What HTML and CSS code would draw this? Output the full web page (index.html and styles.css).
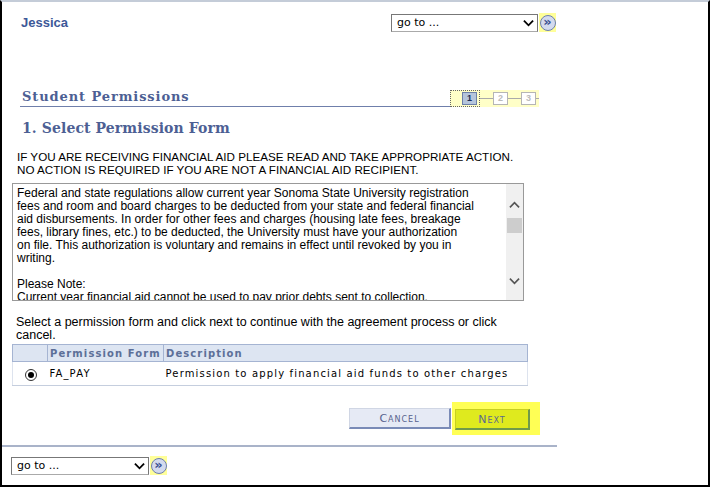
FILE: index.html
```html
<!DOCTYPE html>
<html lang="en">
<head>
    <meta charset="UTF-8">
    <title>Student Permissions</title>
    <link rel="stylesheet" href="styles.css">
</head>
<body>
<div class="page">

    <div class="topbar">
        <div class="user">Jessica</div>
        <div class="goto">
            <div class="select wide"><span>go to ...</span><svg class="chev" viewBox="0 0 12 8"><path d="M1 1.5 L6 6.5 L11 1.5" fill="none" stroke="#000" stroke-width="2"/></svg></div>
            <div class="gobtn"><span class="circ">&raquo;</span></div>
        </div>
    </div>

    <div class="titlebar">
        <h1>Student Permissions</h1>
        <div class="steps">
            <div class="step-cur"><span class="box on">1</span></div>
            <span class="link"></span>
            <span class="box">2</span>
            <span class="link"></span>
            <span class="box">3</span>
            <span class="link short"></span>
        </div>
    </div>

    <h2>1. Select Permission Form</h2>

    <p class="notice">IF YOU ARE RECEIVING FINANCIAL AID PLEASE READ AND TAKE APPROPRIATE ACTION.<br>NO ACTION IS REQUIRED IF YOU ARE NOT A FINANCIAL AID RECIPIENT.</p>

    <div class="terms">
        <div class="terms-text">
            Federal and state regulations allow current year Sonoma State University registration<br>
            fees and room and board charges to be deducted from your state and federal financial<br>
            aid disbursements. In order for other fees and charges (housing late fees, breakage<br>
            fees, library fines, etc.) to be deducted, the University must have your authorization<br>
            on file. This authorization is voluntary and remains in effect until revoked by you in<br>
            writing.<br><br>
            Please Note:<br>
            Current year financial aid cannot be used to pay prior debts sent to collection.
        </div>
        <div class="scroll">
            <svg class="arr up" viewBox="0 0 12 8"><path d="M1 6.5 L6 1.5 L11 6.5" fill="none" stroke="#555" stroke-width="1.8"/></svg>
            <div class="thumb"></div>
            <div class="track"></div>
            <svg class="arr down" viewBox="0 0 12 8"><path d="M1 1.5 L6 6.5 L11 1.5" fill="none" stroke="#555" stroke-width="1.8"/></svg>
        </div>
    </div>

    <p class="hint">Select a permission form and click next to continue with the agreement process or click cancel.</p>

    <table class="grid">
        <tr class="head">
            <th class="c-radio"></th>
            <th class="c-form">Permission Form</th>
            <th class="c-desc">Description</th>
        </tr>
        <tr class="row">
            <td class="c-radio"><span class="radio"><span class="dot"></span></span></td>
            <td class="c-form">FA_PAY</td>
            <td class="c-desc">Permission to apply financial aid funds to other charges</td>
        </tr>
    </table>

    <div class="actions">
        <button class="btn cancel">Cancel</button>
        <div class="hl"><button class="btn next">Next</button></div>
    </div>

    <div class="footbar">
        <div class="goto">
            <div class="select narrow"><span>go to ...</span><svg class="chev" viewBox="0 0 12 8"><path d="M1 1.5 L6 6.5 L11 1.5" fill="none" stroke="#000" stroke-width="2"/></svg></div>
            <div class="gobtn"><span class="circ">&raquo;</span></div>
        </div>
    </div>

</div>
</body>
</html>
```

FILE: styles.css
```css
* { margin: 0; padding: 0; box-sizing: border-box; }
body { background: #fff; font-family: "Liberation Sans", Arial, sans-serif; font-size: 11.65px; color: #000; }
.page { width: 710px; height: 487px; border: 2px solid #000; border-top: 2px solid #c4ccd8; overflow: hidden; }

/* top bar */
.topbar { display: flex; justify-content: space-between; padding: 11px 0 0 19px; width: 554px; }
.user { font-weight: bold; font-size: 13px; color: #3c5898; padding-top: 2px; }
.goto { display: flex; align-items: center; gap: 1px; }
.select { height: 18px; border: 1px solid #777; border-bottom-color: #aaa; display: flex; align-items: center; justify-content: space-between; padding: 0 3px 0 5px; font-size: 11px; font-family: "DejaVu Sans", sans-serif; }
.select.wide { width: 147px; }
.select.narrow { width: 138px; }
.chev { width: 11px; height: 8px; }
.gobtn { width: 17px; height: 19px; background: #ffff99; display: flex; align-items: center; justify-content: center; }
.circ { width: 16px; height: 16px; border-radius: 50%; border: 1px solid #6d7fae; background: #d3daee; color: #3a4f8f; font-family: "DejaVu Sans", sans-serif; font-size: 13px; line-height: 12px; text-align: center; font-weight: bold; }

/* title */
.titlebar { display: flex; align-items: flex-end; margin: 57px 0 0 18px; width: 519px; }
h1 { flex: 1; font-family: "DejaVu Serif", Georgia, serif; font-size: 13px; letter-spacing: 0.9px; color: #4d5f94; border-bottom: 1px solid #6f7fab; padding: 0 0 2px 2px; }
.steps { display: flex; align-items: center; height: 17px; background: #ffffc8; margin-bottom: 0; }
.step-cur { border: 1px dotted #666; height: 17px; width: 30px; display: flex; align-items: center; justify-content: flex-end; padding-right: 2px; }
.box { width: 15px; height: 13px; border: 1px solid #b5b5b5; background: #fff; color: #bbb; font-size: 9px; font-weight: bold; line-height: 11px; text-align: center; }
.box.on { background: #b4c4dc; border-color: #6c7fa8; color: #1c2c54; }
.link { width: 13px; height: 1px; background: #aaa; }
.link.short { width: 3px; }

h2 { font-family: "DejaVu Serif", Georgia, serif; font-size: 14px; color: #4d5f94; margin: 13px 0 0 20px; letter-spacing: 0.1px; }

.notice { margin: 14px 0 0 15px; line-height: 13px; }

/* terms box */
.terms { display: flex; width: 512px; height: 118px; margin: 7px 0 0 10px; border: 1px solid #999; }
.terms-text { flex: 1; padding: 3px 10px 0 4px; font-size: 12px; line-height: 13px; overflow: hidden; }
.scroll { width: 17px; background: #f0f0f0; display: flex; flex-direction: column; align-items: center; }
.arr { width: 11px; height: 8px; }
.arr.up { margin-top: 17px; }
.arr.down { margin-bottom: 15px; }
.thumb { width: 15px; height: 15px; background: #cdcdcd; margin-top: 9px; }
.track { flex: 1; }

.hint { margin: 15px 0 0 14px; width: 495px; font-size: 12.5px; line-height: 13px; }

/* grid */
.grid { margin: 2px 0 0 10px; width: 516px; border-collapse: collapse; font-family: "DejaVu Sans", sans-serif; font-size: 10px; letter-spacing: 1.15px; }
.grid th { background: #dde5f2; border: 1px solid #a5b4d2; height: 17px; text-align: left; color: #5c6f98; font-weight: bold; padding: 0 2px; letter-spacing: 1.1px; }
.grid td { border-bottom: 1px solid #c5cede; height: 24px; padding: 0 2px; }
.grid tr.row td.c-radio { border-left: 1px solid #dde3ee; }
.grid tr.row td.c-desc { border-right: 1px solid #dde3ee; }
.c-radio { width: 35px; }
.c-form { width: 116px; }
.radio { display: inline-block; width: 12px; height: 12px; border-radius: 50%; border: 1px solid #333; margin-left: 10px; position: relative; top: 2px; }
.dot { position: absolute; left: 2px; top: 2px; width: 6px; height: 6px; border-radius: 50%; background: #000; }

/* actions */
.actions { display: flex; align-items: center; justify-content: flex-end; gap: 1px; width: 538px; margin-top: 16px; }
.hl { background: #ffff55; padding: 7px 10px 5px 3px; }
.btn { height: 21px; font-family: "DejaVu Sans", sans-serif; font-size: 11px; font-variant: small-caps; text-transform: lowercase; letter-spacing: 1px; border: 1px solid #d0d6e4; border-right: 2px solid #7a8bb7; border-bottom: 2px solid #7a8bb7; }
.btn::first-letter { text-transform: uppercase; }
.cancel { width: 102px; background: #e6eaf5; color: #56628e; }
.next { width: 75px; background: #dfea1e; color: #5b6890; border-color: #c8d020 #6f9a4a #6f9a4a #c8d020; }

/* footer */
.footbar { margin-top: 10px; width: 555px; border-top: 2px solid #a9b3c9; padding: 9px 0 0 9px; }
```
